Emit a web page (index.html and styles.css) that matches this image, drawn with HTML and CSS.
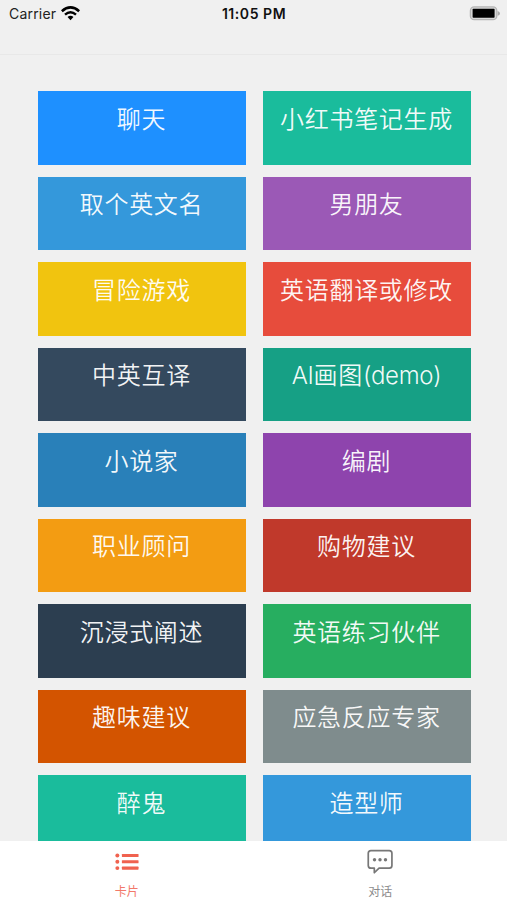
FILE: index.html
```html
<!DOCTYPE html>
<html lang="zh-CN">
  <head>
    <meta charset="UTF-8" />
    <meta name="viewport" content="width=device-width, initial-scale=1.0" />
    <title>卡片</title>
    <link rel="stylesheet" href="styles.css">
  </head>
  <body>
    <div class="app">
      <header class="header">
        <div class="status-left">
          <span>Carrier</span>
          <svg class="wifi" viewBox="0 0 18 14" width="19" height="15">
            <path d="M0.8 4.8 Q9 -2.4 17.2 4.8" fill="none" stroke="#000" stroke-width="2.5" />
            <path d="M3.8 8.1 Q9 3.5 14.2 8.1" fill="none" stroke="#000" stroke-width="2.3" />
            <path d="M6.2 10.4 Q9 7.9 11.8 10.4 L9 13.3 Z" fill="#000" />
          </svg>
        </div>
        <div class="status-time">11:05 PM</div>
        <div class="status-right">
          <svg viewBox="0 0 32 15" width="32" height="15">
            <rect x="1.4" y="0.9" width="26.4" height="12.8" rx="3.8" fill="#d8d8d8" stroke="#b4b4b4" stroke-width="1.3" />
            <rect x="3.6" y="2.8" width="22" height="9" rx="0.8" fill="#000" />
            <path d="M28.6 5 Q31 5.8 31 7.4 Q31 9 28.6 9.8 Z" fill="#a9a9a9" />
          </svg>
        </div>
      </header>

      <main class="cards">
        <div class="card dodger">聊天</div>
        <div class="card turquoise">小红书笔记生成</div>
        <div class="card blue">取个英文名</div>
        <div class="card amethyst">男朋友</div>
        <div class="card yellow">冒险游戏</div>
        <div class="card red">英语翻译或修改</div>
        <div class="card asphalt">中英互译</div>
        <div class="card green-sea"><span class="latin">AI</span>画图<span class="latin">(demo)</span></div>
        <div class="card belize">小说家</div>
        <div class="card wisteria">编剧</div>
        <div class="card orange">职业顾问</div>
        <div class="card pomegranate">购物建议</div>
        <div class="card midnight">沉浸式阐述</div>
        <div class="card nephritis">英语练习伙伴</div>
        <div class="card pumpkin">趣味建议</div>
        <div class="card asbestos">应急反应专家</div>
        <div class="card turquoise">醉鬼</div>
        <div class="card blue">造型师</div>
      </main>

      <nav class="tab-bar">
        <a class="tab active">
          <svg viewBox="0 0 28 28" width="28" height="28" fill="currentColor">
            <circle cx="3.8" cy="6.9" r="2.1" />
            <circle cx="3.8" cy="13.5" r="2.1" />
            <circle cx="3.8" cy="20.2" r="2.1" />
            <rect x="8.6" y="5.3" width="17.6" height="3.2" rx="0.6" />
            <rect x="8.6" y="11.9" width="17.6" height="3.2" rx="0.6" />
            <rect x="8.6" y="18.6" width="17.6" height="3.2" rx="0.6" />
          </svg>
          <span>卡片</span>
        </a>
        <a class="tab">
          <svg viewBox="0 0 28 28" width="28" height="28" fill="currentColor">
            <path d="M4.4 1.8 H23.8 Q26.6 1.8 26.6 4.6 V17.5 Q26.6 20.3 23.8 20.3 H13 L8 25.1 V20.3 H4.4 Q1.6 20.3 1.6 17.5 V4.6 Q1.6 1.8 4.4 1.8 Z" fill="none" stroke="currentColor" stroke-width="1.8" stroke-linejoin="round" />
            <circle cx="8.2" cy="11.3" r="1.8" />
            <circle cx="14" cy="11.3" r="1.8" />
            <circle cx="19.8" cy="11.3" r="1.8" />
          </svg>
          <span>对话</span>
        </a>
      </nav>
    </div>
  </body>
</html>
```
FILE: styles.css
```css
* {
  margin: 0;
  padding: 0;
  box-sizing: border-box;
}

body {
  font-family: Inter, "Noto Sans CJK SC", sans-serif;
  background: #f0f0f0;
}

.app {
  display: flex;
  flex-direction: column;
  height: 100vh;
  overflow: hidden;
}

.header {
  display: grid;
  grid-template-columns: 1fr auto 1fr;
  align-items: start;
  flex: none;
  height: 55px;
  padding: 6px 6px 0 9px;
  border-bottom: 1px solid #e8e8e8;
  color: #111;
  font-size: 14px;
  line-height: 16px;
}

.status-left {
  display: flex;
  gap: 5px;
  color: #222;
  letter-spacing: 0.2px;
}

.status-time {
  padding-right: 2px;
  font-weight: 600;
  letter-spacing: 0.55px;
}

.status-right {
  display: flex;
  justify-content: flex-end;
}

.cards {
  flex: 1;
  min-height: 0;
  overflow: hidden;
  display: grid;
  grid-template-columns: 208px 208px;
  grid-auto-rows: 73.3px;
  align-content: start;
  gap: 12.2px 17px;
  padding: 36.4px 0 0 37.5px;
}

.card {
  padding-top: 10.6px;
  color: rgba(255, 255, 255, 0.95);
  font-size: 24px;
  font-weight: 350;
  line-height: 36px;
  letter-spacing: 0.7px;
  text-align: center;
  white-space: nowrap;
}

.latin {
  letter-spacing: -0.3px;
}

.dodger {
  background: #1e90ff;
}

.turquoise {
  background: #1abc9c;
}

.blue {
  background: #3498db;
}

.amethyst {
  background: #9b59b6;
}

.yellow {
  background: #f1c40f;
}

.red {
  background: #e74c3c;
}

.asphalt {
  background: #34495e;
}

.green-sea {
  background: #16a085;
}

.belize {
  background: #2980b9;
}

.wisteria {
  background: #8e44ad;
}

.orange {
  background: #f39c12;
}

.pomegranate {
  background: #c0392b;
}

.midnight {
  background: #2c3e50;
}

.nephritis {
  background: #27ae60;
}

.pumpkin {
  background: #d35400;
}

.asbestos {
  background: #7f8c8d;
}

.tab-bar {
  display: flex;
  flex: none;
  height: 59.5px;
  background: #fff;
}

.tab {
  display: flex;
  flex: 1;
  flex-direction: column;
  align-items: center;
  gap: 9px;
  padding-top: 8px;
  color: #777;
  font-size: 12px;
  line-height: 16px;
}

.tab span {
  opacity: 0.85;
}

.tab.active {
  color: #f0624f;
}
```
